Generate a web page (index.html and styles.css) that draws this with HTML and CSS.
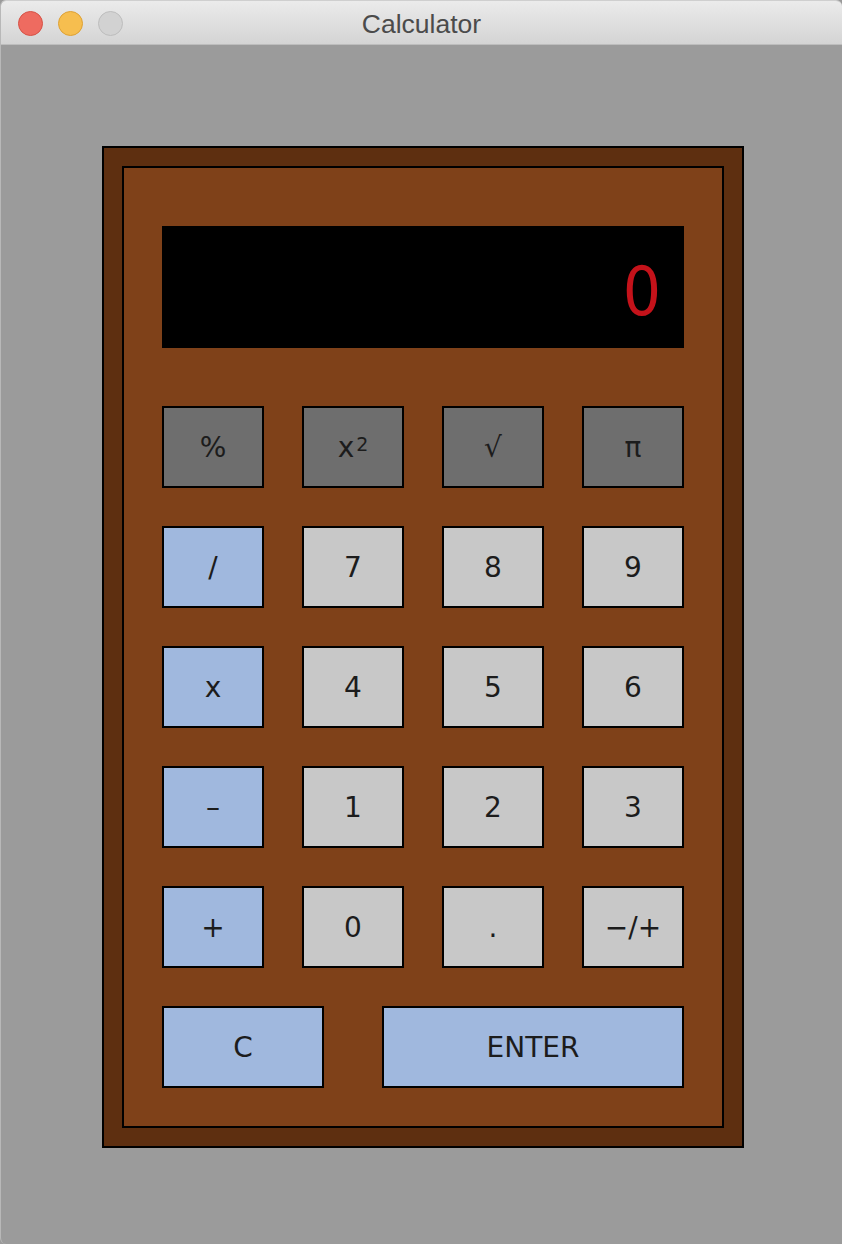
FILE: index.html
```html
<!DOCTYPE html>
<html>
<head>
<meta charset="utf-8">
<title>Calculator</title>
<link rel="stylesheet" href="styles.css">
</head>
<body>
<div class="window">
  <div class="titlebar">
    <div class="lights">
      <span class="light red"></span>
      <span class="light yellow"></span>
      <span class="light gray"></span>
    </div>
    <div class="title">Calculator</div>
  </div>
  <div class="content">
    <div class="frame">
      <div class="panel">
        <div class="display">0</div>
        <div class="keys">
          <div class="key dark">%</div>
          <div class="key dark">x<sup>2</sup></div>
          <div class="key dark">√</div>
          <div class="key dark">π</div>

          <div class="key blue">/</div>
          <div class="key num">7</div>
          <div class="key num">8</div>
          <div class="key num">9</div>

          <div class="key blue">x</div>
          <div class="key num">4</div>
          <div class="key num">5</div>
          <div class="key num">6</div>

          <div class="key blue">–</div>
          <div class="key num">1</div>
          <div class="key num">2</div>
          <div class="key num">3</div>

          <div class="key blue">+</div>
          <div class="key num">0</div>
          <div class="key num">.</div>
          <div class="key num">−/+</div>
        </div>
        <div class="bottom-row">
          <div class="key blue clear">C</div>
          <div class="key blue enter">ENTER</div>
        </div>
      </div>
    </div>
  </div>
</div>
</body>
</html>
```

FILE: styles.css
```css
* { box-sizing: border-box; }
html, body { margin: 0; padding: 0; }
body {
  width: 842px;
  height: 1244px;
  background: #9a9a9a;
  overflow: hidden;
  font-family: "DejaVu Sans", "Liberation Sans", sans-serif;
}
.window {
  width: 842px;
  height: 1244px;
  background: #9b9b9b;
  border-left: 1px solid #b8b8b8;
  border-top: 1px solid #cfcfcf;
  border-radius: 6px;
  overflow: hidden;
  display: flex;
  flex-direction: column;
}
.titlebar {
  height: 44px;
  flex: none;
  background: linear-gradient(#ebebeb, #d4d4d4);
  border-bottom: 1px solid #bdbdbd;
  display: flex;
  align-items: center;
  justify-content: center;
  position: relative;
}
.lights {
  position: absolute;
  left: 17px;
  top: 10px;
  display: flex;
  gap: 15px;
}
.light {
  width: 25px;
  height: 25px;
  border-radius: 50%;
  display: block;
}
.light.red { background: #ee6b60; border: 1px solid #d65246; }
.light.yellow { background: #f6be4f; border: 1px solid #dea134; }
.light.gray { background: #d2d2d2; border: 1px solid #bdbdbd; }
.title {
  font-family: "Liberation Sans", "Roboto", sans-serif;
  font-size: 26.5px;
  color: #4b4b4b;
  margin-top: 3px;
}
.content {
  flex: 1;
  padding: 101px 0 0 101px;
}
.frame {
  width: 642px;
  height: 1002px;
  border: 2px solid #000;
  background: #5e2f10;
  padding: 18px;
}
.panel {
  width: 602px;
  height: 962px;
  border: 2px solid #000;
  background: #7f4119;
  padding: 58px 38px 38px 38px;
  display: flex;
  flex-direction: column;
}
.display {
  height: 122px;
  background: #000;
  color: #c4121a;
  font-family: "DejaVu Sans Condensed", "DejaVu Sans", sans-serif;
  font-stretch: condensed;
  font-size: 67px;
  text-align: right;
  padding-right: 23px;
  padding-top: 10px;
  line-height: 112px;
}
.keys {
  margin-top: 58px;
  display: grid;
  grid-template-columns: repeat(4, 102px);
  grid-auto-rows: 82px;
  column-gap: 38px;
  row-gap: 38px;
}
.key {
  border: 2px solid #000;
  display: flex;
  align-items: center;
  justify-content: center;
  font-size: 28px;
  color: #1c1c1c;
}
.key sup {
  font-size: 19px;
  position: relative;
  top: -3px;
  margin-left: 2px;
}
.dark { background: #6e6e6e; }
.num { background: #c8c8c8; }
.blue { background: #a0b8de; }
.bottom-row {
  margin-top: 38px;
  height: 82px;
  display: flex;
  justify-content: space-between;
}
.clear { width: 162px; }
.enter { width: 302px; }
```
